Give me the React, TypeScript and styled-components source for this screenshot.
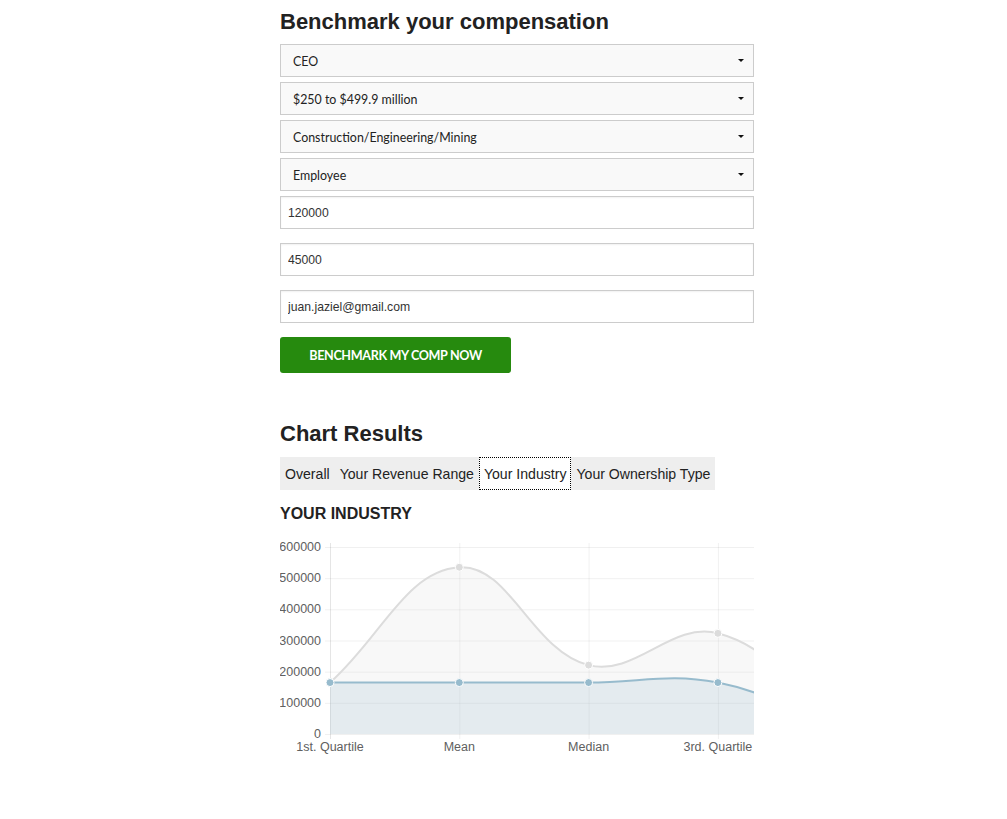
import React from "react";
import styled, { createGlobalStyle } from "styled-components";

const GlobalStyle = createGlobalStyle`
  html, body { margin: 0; padding: 0; background: #fff; }
  body { font-family: "Liberation Sans", Arial, sans-serif; color: #222; }
  * { box-sizing: border-box; }
`;

const Page = styled.div`
  width: 474px;
  margin-left: 280px;
  padding-top: 9px;
  padding-bottom: 40px;
`;

const Title = styled.h2`
  margin: 0 0 9px;
  font-family: "Liberation Sans", Arial, sans-serif;
  font-weight: 700;
  font-size: 22px;
  line-height: 26px;
  color: #222;
`;

const Form = styled.form`
  display: flex;
  flex-direction: column;
`;

const SelectWrap = styled.div`
  position: relative;
  height: 33px;
  margin-bottom: 5px;
`;

const Select = styled.select`
  appearance: none;
  -webkit-appearance: none;
  width: 100%;
  height: 33px;
  border: 1px solid #cccccc;
  background: #f9f9f9;
  border-radius: 0;
  padding: 1px 30px 0 12px;
  font-family: Lato, "Liberation Sans", sans-serif;
  font-size: 12.4px;
  color: #222;
  outline: none;
`;

const Caret = styled.span`
  position: absolute;
  right: 10px;
  top: 15px;
  width: 0;
  height: 0;
  border-left: 3px solid transparent;
  border-right: 3px solid transparent;
  border-top: 3px solid #111;
  pointer-events: none;
`;

const Input = styled.input`
  width: 100%;
  height: 33px;
  border: 1px solid #cccccc;
  box-shadow: inset 0 1px 2px rgba(0, 0, 0, 0.06);
  background: #fff;
  padding: 0 7px;
  font-family: "Liberation Sans", Arial, sans-serif;
  font-size: 12.2px;
  color: #333;
  margin-bottom: 14px;
  border-radius: 0;
  outline: none;
`;

const Button = styled.button`
  width: 231px;
  height: 36px;
  border: none;
  border-radius: 3px;
  background: #268a0e;
  color: #fff;
  font-family: Lato, "Liberation Sans", sans-serif;
  font-weight: 700;
  font-size: 12.6px;
  text-transform: uppercase;
  letter-spacing: -0.35px;
  cursor: pointer;
`;

const ResultsTitle = styled.h2`
  margin: 48px 0 10px;
  font-family: "Liberation Sans", Arial, sans-serif;
  font-weight: 700;
  font-size: 22px;
  line-height: 26px;
  color: #222;
`;

const Tabs = styled.ul`
  display: inline-flex;
  list-style: none;
  margin: 0;
  padding: 0;
  background: #eeeeee;
  height: 33px;
`;

const Tab = styled.li<{ $active?: boolean }>`
  display: flex;
  align-items: center;
  padding: 0 5px;
  font-family: "Liberation Sans", Arial, sans-serif;
  font-size: 14.1px;
  color: #222;
  background: ${(p) => (p.$active ? "#fff" : "transparent")};
  outline: ${(p) => (p.$active ? "1px dotted #000" : "none")};
  outline-offset: -1px;
  white-space: nowrap;
`;

const SectionLabel = styled.h3`
  margin: 14px 0 6px;
  font-family: "Liberation Sans", Arial, sans-serif;
  font-weight: 700;
  font-size: 16px;
  line-height: 20px;
  color: #222;
`;

const ChartBox = styled.div`
  width: 474px;
  height: 230px;
  overflow: hidden;
`;

type Pt = { x: number; y: number };

const LEFT = 50;
const TOP = 17;
const BOTTOM = 204;
const STEP = 129.3;
const MAX = 600000;
const labels = ["1st. Quartile", "Mean", "Median", "3rd. Quartile", ""];
const gray = [165000, 535000, 221000, 323000, 0];
const blue = [165000, 165000, 165000, 165000, 0];

const yOf = (v: number) => BOTTOM - (v / MAX) * (BOTTOM - TOP);
const xOf = (i: number) => LEFT + i * STEP;

function buildPath(values: number[]) {
  const pts: Pt[] = values.map((v, i) => ({ x: xOf(i), y: yOf(v) }));
  const t = 0.4;
  const ctrl = pts.map((p, i) => {
    const a = pts[i - 1] || p;
    const c = pts[i + 1] || p;
    const d01 = Math.hypot(p.x - a.x, p.y - a.y);
    const d12 = Math.hypot(c.x - p.x, c.y - p.y);
    const sum = d01 + d12 || 1;
    const fa = (t * d01) / sum;
    const fb = (t * d12) / sum;
    const clamp = (y: number) => Math.min(BOTTOM, Math.max(TOP, y));
    return {
      inner: { x: p.x - fa * (c.x - a.x), y: clamp(p.y - fa * (c.y - a.y)) },
      outer: { x: p.x + fb * (c.x - a.x), y: clamp(p.y + fb * (c.y - a.y)) },
    };
  });
  let d = `M ${pts[0].x} ${pts[0].y}`;
  for (let i = 1; i < pts.length; i++) {
    const c1 = ctrl[i - 1].outer;
    const c2 = ctrl[i].inner;
    d += ` C ${c1.x} ${c1.y} ${c2.x} ${c2.y} ${pts[i].x} ${pts[i].y}`;
  }
  const last = pts[pts.length - 1];
  const fill = `${d} L ${last.x} ${BOTTOM} L ${pts[0].x} ${BOTTOM} Z`;
  return { line: d, fill, pts };
}

const Chart: React.FC = () => {
  const g = buildPath(gray);
  const b = buildPath(blue);
  const ticks = [0, 100000, 200000, 300000, 400000, 500000, 600000];
  return (
    <ChartBox>
      <svg width="474" height="230" viewBox="0 0 474 230" fontFamily="Liberation Sans, Arial, sans-serif">
        {ticks.map((v) => (
          <g key={v}>
            <line x1={LEFT - 5} x2={474} y1={yOf(v) + 0.5} y2={yOf(v) + 0.5} stroke="rgba(0,0,0,0.06)" strokeWidth="1" />
            <text x={41} y={yOf(v) + 4} fontSize="12.5" fill="#606060" textAnchor="end">
              {v}
            </text>
          </g>
        ))}
        {labels.map((l, i) => (
          <g key={i}>
            <line
              x1={xOf(i) + 0.5}
              x2={xOf(i) + 0.5}
              y1={TOP - 4}
              y2={BOTTOM + 5}
              stroke={i === 0 ? "rgba(0,0,0,0.1)" : "rgba(0,0,0,0.06)"}
              strokeWidth="1"
            />
            <text x={xOf(i)} y={BOTTOM + 17} fontSize="12.5" fill="#606060" textAnchor="middle">
              {l}
            </text>
          </g>
        ))}
        <path d={g.fill} fill="rgba(220,220,220,0.2)" />
        <path d={g.line} fill="none" stroke="rgba(220,220,220,1)" strokeWidth="2" />
        {g.pts.map((p, i) => (
          <circle key={i} cx={p.x} cy={p.y} r="4" fill="rgba(220,220,220,1)" stroke="#fff" strokeWidth="1" />
        ))}
        <path d={b.fill} fill="rgba(151,187,205,0.2)" />
        <path d={b.line} fill="none" stroke="rgba(151,187,205,1)" strokeWidth="2" />
        {b.pts.map((p, i) => (
          <circle key={i} cx={p.x} cy={p.y} r="4" fill="rgba(151,187,205,1)" stroke="#fff" strokeWidth="1" />
        ))}
      </svg>
    </ChartBox>
  );
};

const selects = [
  "CEO",
  "$250 to $499.9 million",
  "Construction/Engineering/Mining",
  "Employee",
];

export default function App() {
  return (
    <>
      <GlobalStyle />
      <Page>
        <Title>Benchmark your compensation</Title>
        <Form onSubmit={(e) => e.preventDefault()}>
          {selects.map((s) => (
            <SelectWrap key={s}>
              <Select defaultValue={s}>
                <option>{s}</option>
              </Select>
              <Caret />
            </SelectWrap>
          ))}
          <Input defaultValue="120000" />
          <Input defaultValue="45000" />
          <Input defaultValue="juan.jaziel@gmail.com" />
          <div>
            <Button type="submit">Benchmark my comp now</Button>
          </div>
        </Form>
        <ResultsTitle>Chart Results</ResultsTitle>
        <Tabs>
          <Tab>Overall</Tab>
          <Tab>Your Revenue Range</Tab>
          <Tab $active>Your Industry</Tab>
          <Tab>Your Ownership Type</Tab>
        </Tabs>
        <SectionLabel>YOUR INDUSTRY</SectionLabel>
        <Chart />
      </Page>
    </>
  );
}
